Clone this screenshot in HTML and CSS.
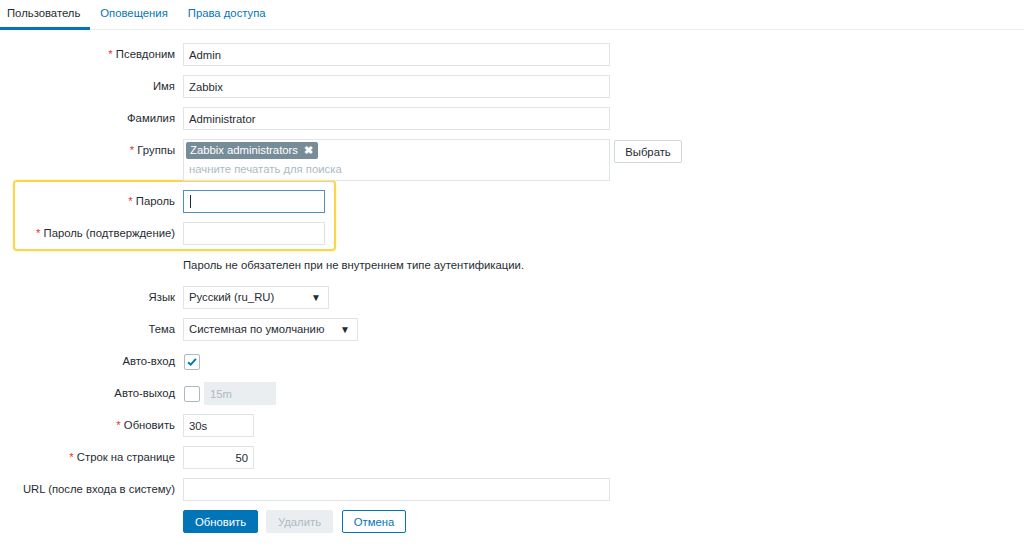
FILE: index.html
```html
<!DOCTYPE html>
<html lang="ru">
<head>
<meta charset="utf-8">
<title>Пользователь</title>
<link rel="stylesheet" href="styles.css">
</head>
<body>
<nav class="tabs">
  <a class="tab active">Пользователь</a>
  <a class="tab">Оповещения</a>
  <a class="tab">Права доступа</a>
</nav>
<div class="form-wrap">
  <div class="highlight"></div>
  <div class="form">
    <label class="lbl"><span class="req">*</span> Псевдоним</label>
    <div class="field"><input class="txt w-wide" value="Admin"></div>

    <label class="lbl">Имя</label>
    <div class="field"><input class="txt w-wide" value="Zabbix"></div>

    <label class="lbl">Фамилия</label>
    <div class="field"><input class="txt w-wide" value="Administrator"></div>

    <label class="lbl"><span class="req">*</span> Группы</label>
    <div class="field groups">
      <div class="multi">
        <span class="tag">Zabbix administrators <span class="tag-x">✖</span></span>
        <span class="placeholder">начните печатать для поиска</span>
      </div>
      <button class="btn-alt">Выбрать</button>
    </div>

    <label class="lbl"><span class="req">*</span> Пароль</label>
    <div class="field"><input class="txt w-pass focus" type="text" value=""><span class="caret"></span></div>

    <label class="lbl"><span class="req">*</span> Пароль (подтверждение)</label>
    <div class="field"><input class="txt w-pass" value=""></div>

    <div class="lbl"></div>
    <div class="field hint">Пароль не обязателен при не внутреннем типе аутентификации.</div>

    <label class="lbl">Язык</label>
    <div class="field"><div class="select w-lang">Русский (ru_RU)<span class="arrow">▼</span></div></div>

    <label class="lbl">Тема</label>
    <div class="field"><div class="select w-theme">Системная по умолчанию<span class="arrow">▼</span></div></div>

    <label class="lbl">Авто-вход</label>
    <div class="field"><span class="check checked"><svg viewBox="0 0 16 16" width="16" height="16"><path d="M3.5 8.2 L6.5 11 L12.5 4.5" fill="none" stroke="#0275b8" stroke-width="2.2"/></svg></span></div>

    <label class="lbl">Авто-выход</label>
    <div class="field row-gap"><span class="check"></span><input class="txt w-short disabled" value="15m" disabled></div>

    <label class="lbl"><span class="req">*</span> Обновить</label>
    <div class="field"><input class="txt w-short" value="30s"></div>

    <label class="lbl"><span class="req">*</span> Строк на странице</label>
    <div class="field"><input class="txt w-short right" value="50"></div>

    <label class="lbl">URL (после входа в систему)</label>
    <div class="field"><input class="txt w-wide" value=""></div>

    <div class="lbl"></div>
    <div class="field buttons">
      <button class="btn-main">Обновить</button>
      <button class="btn-disabled">Удалить</button>
      <button class="btn-cancel">Отмена</button>
    </div>
  </div>
</div>
</body>
</html>
```
FILE: styles.css
```css
* { box-sizing: border-box; }
body {
  margin: 0;
  font-family: "Liberation Sans", Arial, sans-serif;
  font-size: 11.3px;
  color: #1f2c33;
  background: #fff;
}
.tabs {
  display: flex;
  height: 30px;
  border-bottom: 1px solid #ebeef0;
}
.tab {
  display: block;
  padding: 7px 10px 0 10px;
  height: 30px;
  color: #0275b8;
  border-bottom: 3px solid transparent;
  margin-bottom: -1px;
}
.tab.active {
  color: #1f2c33;
  border-bottom-color: #0275b8;
  padding-left: 7px;
}
.form-wrap {
  position: relative;
  padding-top: 13px;
}
.highlight {
  position: absolute;
  left: 13px;
  top: 150px;
  width: 323px;
  height: 71px;
  border: 2px solid #fcd548;
  border-radius: 4px;
  box-shadow: 0 0 2px rgba(252, 213, 72, 0.6);
  pointer-events: none;
}
.form {
  display: grid;
  grid-template-columns: 175px auto;
  column-gap: 8px;
  row-gap: 9px;
  align-items: start;
}
.lbl {
  text-align: right;
  line-height: 23px;
  height: 23px;
  white-space: nowrap;
}
.req { color: #e33734; }
.field {
  display: flex;
  align-items: center;
  min-height: 23px;
  position: relative;
}
.txt {
  height: 23px;
  border: 1px solid #dfe4e7;
  padding: 0 5px;
  font-family: inherit;
  font-size: 11.3px;
  color: #1f2c33;
  background: #fff;
  outline: none;
}
.txt.focus { border-color: #4f8fbd; }
.caret {
  position: absolute;
  left: 7px;
  top: 5px;
  width: 1px;
  height: 13px;
  background: #1f2c33;
}
.w-wide { width: 427px; }
.w-pass { width: 142px; }
.w-short { width: 71px; }
.right { text-align: right; }
.txt.disabled {
  width: 72px;
  background: #ebeef0;
  border-color: #ebeef0;
  color: #acbbc2;
}
.groups { align-items: flex-start; gap: 4px; }
.multi {
  width: 427px;
  height: 42px;
  border: 1px solid #dfe4e7;
  padding: 2px 2px;
  display: flex;
  flex-direction: column;
  align-items: flex-start;
}
.tag {
  background: #768d99;
  color: #fff;
  height: 17px;
  line-height: 17px;
  padding: 0 5px 0 4px;
  border-radius: 2px;
}
.tag-x { font-size: 11px; margin-left: 3px; font-weight: bold; }
.placeholder {
  color: #acbbc2;
  margin: 4px 0 0 3px;
}
.btn-alt {
  height: 23px;
  width: 68px;
  margin-top: 1px;
  background: #fff;
  border: 1px solid #cfd8dc;
  border-radius: 2px;
  font-family: inherit;
  font-size: 11.3px;
  color: #1f2c33;
  padding: 0;
}
.hint { line-height: 23px; }
.select {
  height: 23px;
  border: 1px solid #dfe4e7;
  padding: 0 7px 0 5px;
  line-height: 21px;
  display: flex;
  justify-content: space-between;
}
.w-lang { width: 146px; }
.w-theme { width: 175px; }
.arrow { font-size: 10px; }
.check {
  width: 16px;
  height: 16px;
  border: 1px solid #acbbc2;
  border-radius: 2px;
  display: inline-flex;
  align-items: center;
  justify-content: center;
  background: #fff;
  margin-left: 1px;
}
.check svg { width: 14px; height: 14px; }
.row-gap { gap: 4px; }
.buttons { gap: 8px; }
.buttons button {
  height: 23px;
  border-radius: 2px;
  font-family: inherit;
  font-size: 11.3px;
  padding: 0;
}
.btn-main {
  width: 75px;
  background: #0275b8;
  border: 1px solid #0275b8;
  color: #fff;
}
.btn-disabled {
  width: 67px;
  background: #ebeef0;
  border: 1px solid #ebeef0;
  color: #acbbc2;
}
.btn-cancel {
  width: 64px;
  margin-left: 1px;
  background: #fff;
  border: 1px solid #0275b8;
  color: #0275b8;
}
```
